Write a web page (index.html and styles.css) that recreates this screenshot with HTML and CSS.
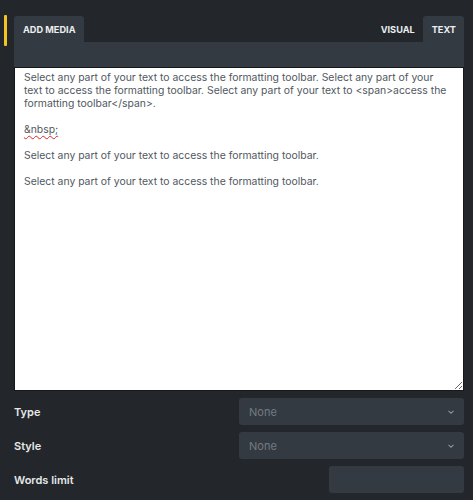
FILE: index.html
```html
<!DOCTYPE html>
<html lang="en">
  <head>
    <meta charset="UTF-8" />
    <meta name="viewport" content="width=device-width, initial-scale=1.0" />
    <title>Editor</title>
    <link rel="stylesheet" href="styles.css">
  </head>
  <body>
    <div class="panel">
      <div class="editor">
        <span class="focus-bar"></span>
        <div class="tabs">
          <button class="tab active">Add Media</button>
          <div class="modes">
            <button class="tab">Visual</button>
            <button class="tab active">Text</button>
          </div>
        </div>
        <div class="toolbar"></div>
        <div class="content" contenteditable="true" spellcheck="false">Select any part of your text to access the formatting toolbar. Select any part of your
text to access the formatting toolbar. Select any part of your text to &lt;span&gt;access the
formatting toolbar&lt;/span&gt;.

<span class="typo">&amp;nbsp;</span>

Select any part of your text to access the formatting toolbar.

Select any part of your text to access the formatting toolbar.</div>
      </div>
      <div class="row">
        <label class="label">Type</label>
        <div class="select">
          <span>None</span>
          <svg width="8" height="6" viewBox="0 0 8 6"><path d="M1.5 1.8 4 4.2 6.5 1.8" fill="none" stroke="#8b929a" stroke-width="1.1"/></svg>
        </div>
      </div>
      <div class="row">
        <label class="label">Style</label>
        <div class="select">
          <span>None</span>
          <svg width="8" height="6" viewBox="0 0 8 6"><path d="M1.5 1.8 4 4.2 6.5 1.8" fill="none" stroke="#8b929a" stroke-width="1.1"/></svg>
        </div>
      </div>
      <div class="row">
        <label class="label">Words limit</label>
        <div class="input"></div>
      </div>
    </div>
  </body>
</html>
```

FILE: styles.css
```css
html, body {
  margin: 0;
  background-color: #23272b;
  font-family: "Inter", "Noto Sans", sans-serif;
}
.panel {
  padding: 16px 9px 0 14px;
}
.editor {
  position: relative;
}
.focus-bar {
  position: absolute;
  left: -10px;
  top: -1px;
  width: 3px;
  height: 31px;
  background-color: #f2c523;
  border-radius: 1px;
}
.tabs {
  display: flex;
  justify-content: space-between;
  align-items: flex-end;
  height: 26px;
}
.modes {
  display: flex;
  align-items: flex-end;
}
.tab {
  border: none;
  margin: 0;
  background: none;
  color: #eceef0;
  font-family: "Inter", sans-serif;
  font-weight: 700;
  font-size: 9.2px;
  text-transform: uppercase;
  height: 26px;
  padding: 0 8px 0 9px;
  border-radius: 3px 3px 0 0;
}
.tab.active {
  background-color: #343a41;
}
.toolbar {
  height: 25px;
  background-color: #343a41;
}
.content {
  box-sizing: border-box;
  height: 324px;
  padding: 3px 2px 3px 9px;
  border: 1px solid #15181b;
  background-color: #ffffff;
  color: #50575e;
  font-size: 10.4px;
  line-height: 13px;
  white-space: pre-wrap;
  overflow: auto;
  resize: vertical;
  outline: none;
}
.typo {
  text-decoration: underline wavy #e0242a;
  text-decoration-thickness: 1px;
  text-underline-offset: 2px;
  text-decoration-skip-ink: none;
}
.row {
  display: flex;
  justify-content: space-between;
  align-items: center;
  margin-top: 7px;
}
.label {
  color: #e6e8ea;
  font-size: 11px;
  font-weight: 600;
}
.select {
  box-sizing: border-box;
  width: 225px;
  height: 27px;
  display: flex;
  justify-content: space-between;
  align-items: center;
  padding: 0 9px 0 10px;
  background-color: #343a41;
  border-radius: 3px;
  color: #737a82;
  font-size: 11px;
}
.input {
  width: 135px;
  height: 27px;
  background-color: #343a41;
  border-radius: 3px;
}
```
